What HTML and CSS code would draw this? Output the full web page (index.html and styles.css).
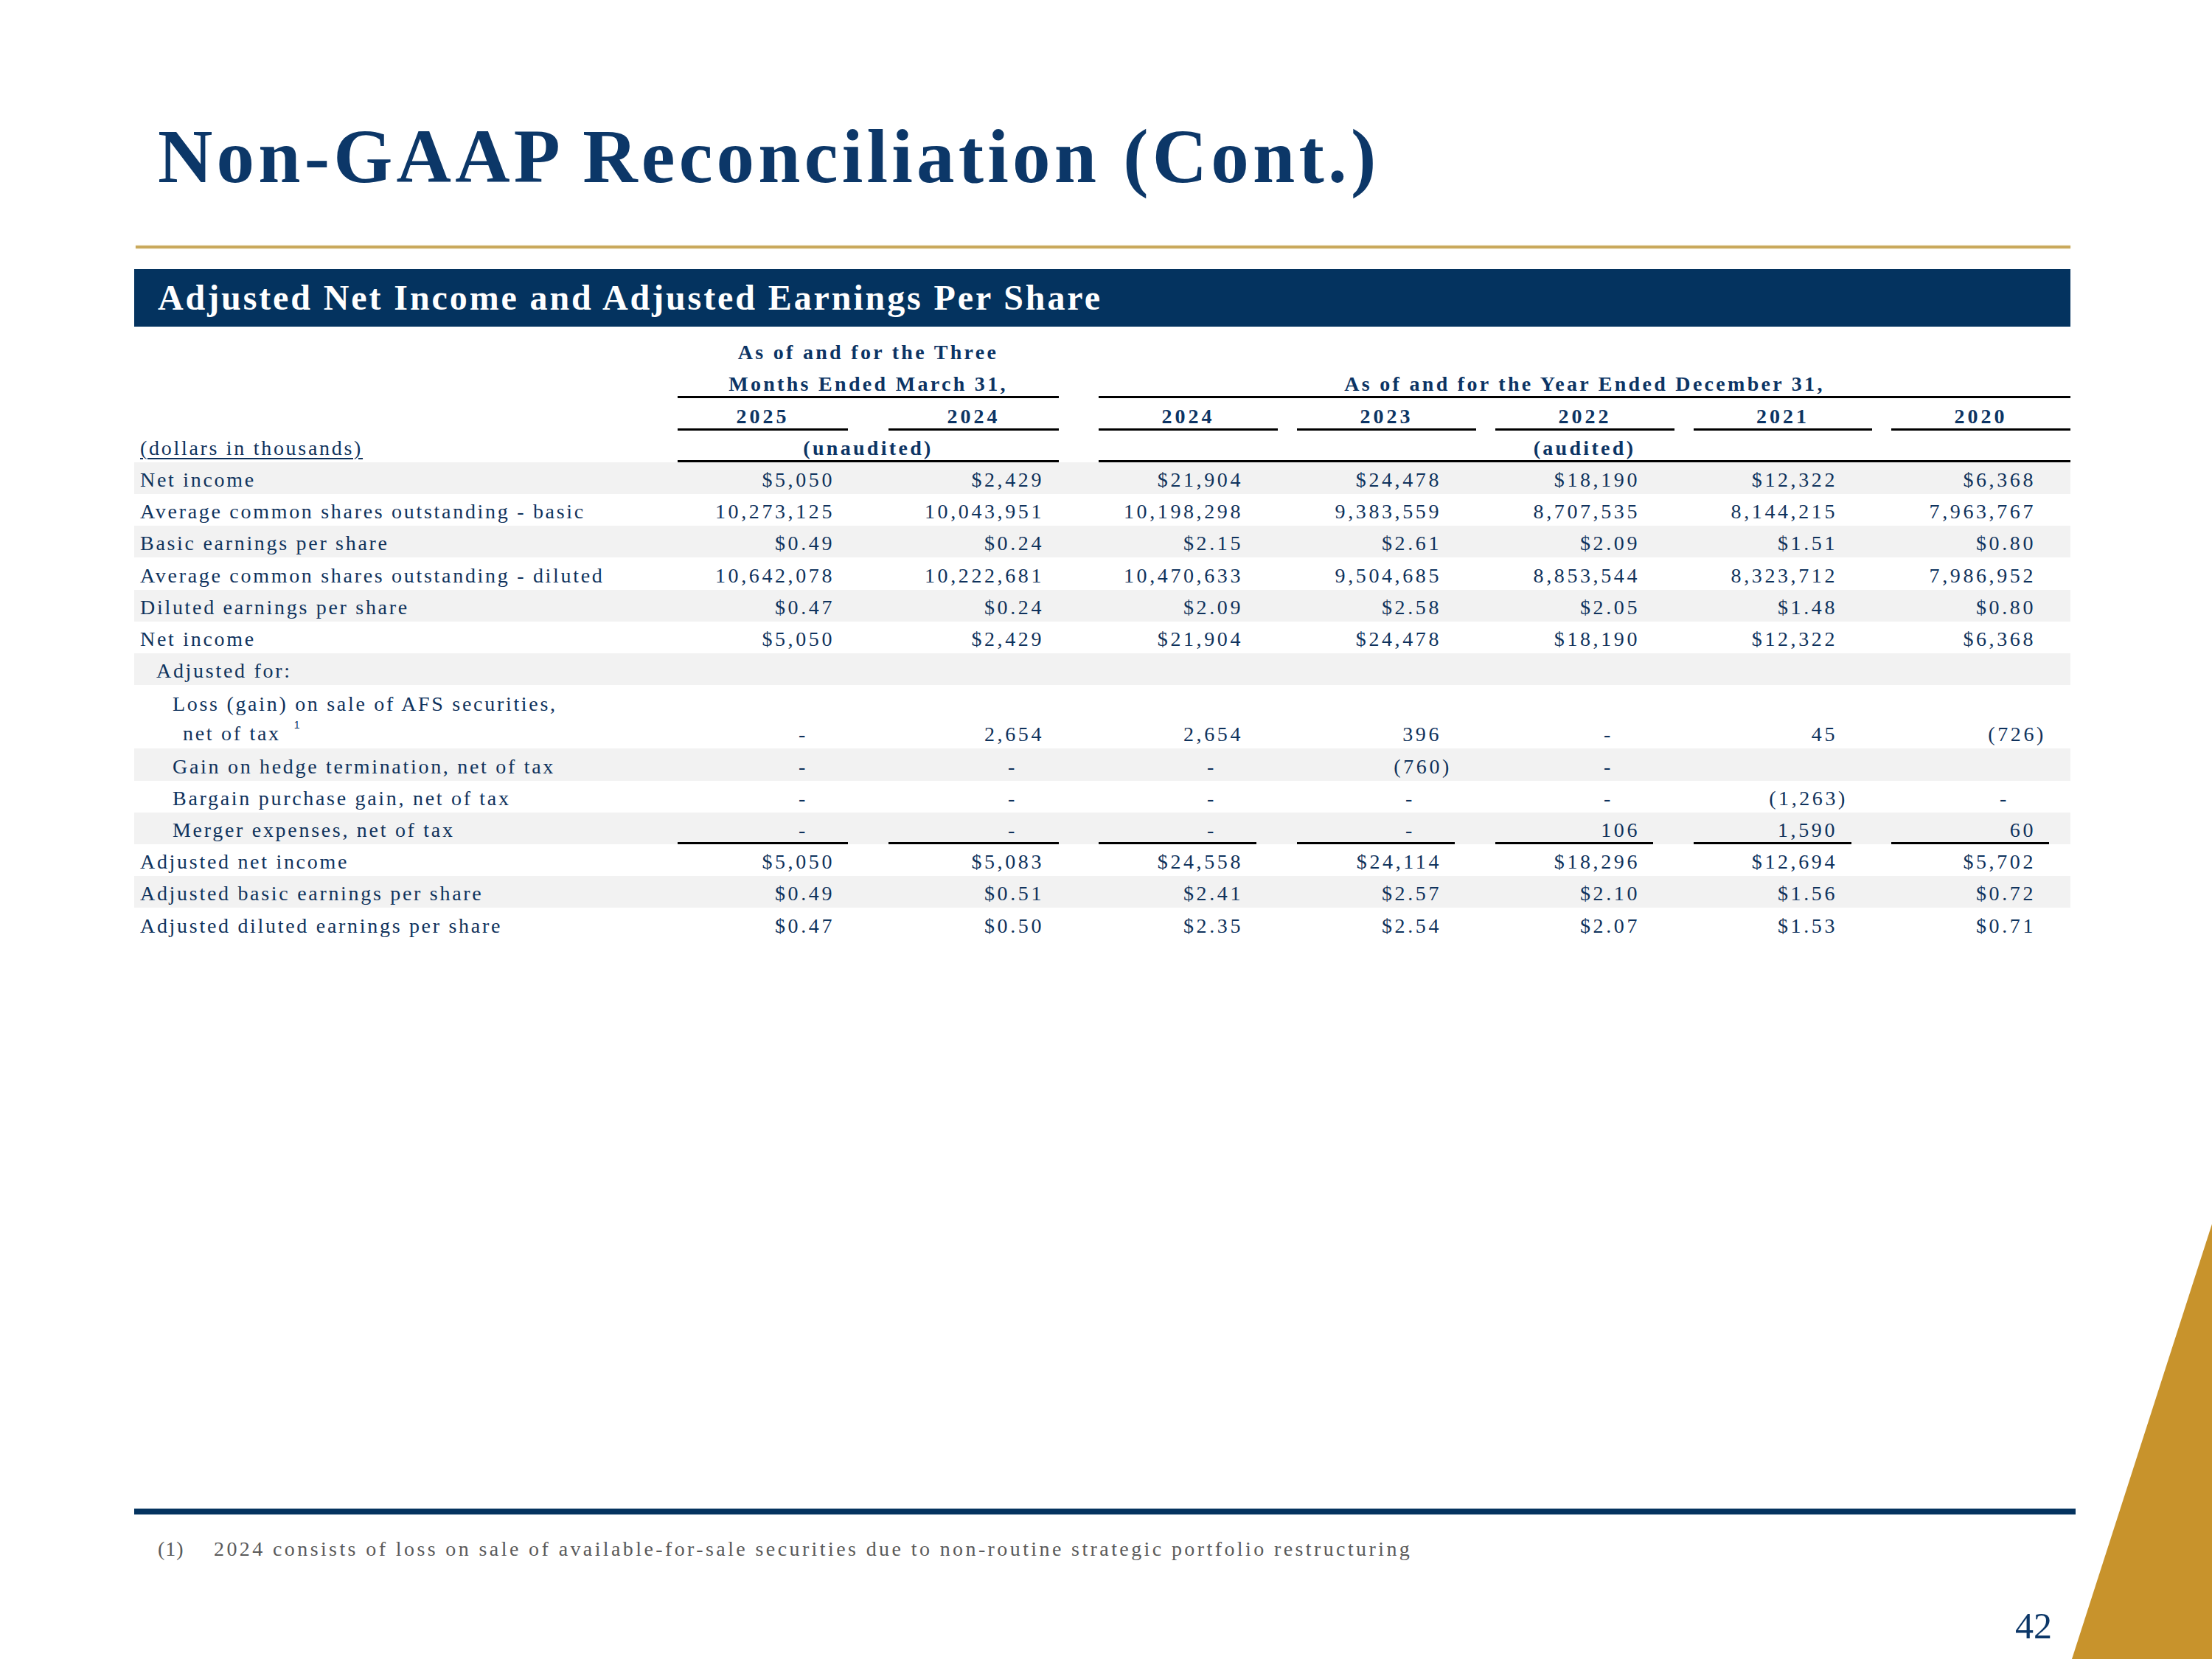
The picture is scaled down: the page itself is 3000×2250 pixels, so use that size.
FILE: index.html
```html
<!DOCTYPE html>
<html>
<head>
<meta charset="utf-8">
<title>Non-GAAP Reconciliation (Cont.)</title>
<link rel="stylesheet" href="styles.css">
</head>
<body>
<div class="page">
  <h1 class="title">Non-GAAP Reconciliation (Cont.)</h1>
  <div class="rule-gold"></div>
  <div class="bar">Adjusted Net Income and Adjusted Earnings Per Share</div>

  <table class="recon">
    <colgroup>
      <col class="w-label">
      <col class="w-q"><col class="w-gq"><col class="w-q"><col class="w-gm">
      <col class="w-y"><col class="w-gy"><col class="w-y"><col class="w-gy"><col class="w-y"><col class="w-gy"><col class="w-y6"><col class="w-gy"><col class="w-y">
    </colgroup>
    <tr class="hd">
      <td></td>
      <td colspan="3" class="hc">As of and for the Three</td>
      <td colspan="10"></td>
    </tr>
    <tr class="hd">
      <td></td>
      <td colspan="3" class="hc ln">Months Ended March 31,</td>
      <td></td>
      <td colspan="9" class="hc ln">As of and for the Year Ended December 31,</td>
    </tr>
    <tr class="hd">
      <td></td>
      <td class="hy ln">2025</td><td></td>
      <td class="hy ln">2024</td><td></td>
      <td class="hy ln">2024</td><td></td>
      <td class="hy ln">2023</td><td></td>
      <td class="hy ln">2022</td><td></td>
      <td class="hy ln">2021</td><td></td>
      <td class="hy ln">2020</td>
    </tr>
    <tr class="hd">
      <td class="lbl"><span class="units">(dollars in thousands)</span></td>
      <td colspan="3" class="hc ln">(unaudited)</td>
      <td></td>
      <td colspan="9" class="hc ln">(audited)</td>
    </tr>

    <tr class="shade">
      <td class="lbl">Net income</td>
      <td class="n q1">$5,050</td><td></td><td class="n q2">$2,429</td><td></td>
      <td class="n">$21,904</td><td></td><td class="n">$24,478</td><td></td><td class="n">$18,190</td><td></td><td class="n">$12,322</td><td></td><td class="n">$6,368</td>
    </tr>
    <tr>
      <td class="lbl">Average common shares outstanding - basic</td>
      <td class="n q1">10,273,125</td><td></td><td class="n q2">10,043,951</td><td></td>
      <td class="n">10,198,298</td><td></td><td class="n">9,383,559</td><td></td><td class="n">8,707,535</td><td></td><td class="n">8,144,215</td><td></td><td class="n">7,963,767</td>
    </tr>
    <tr class="shade">
      <td class="lbl">Basic earnings per share</td>
      <td class="n q1">$0.49</td><td></td><td class="n q2">$0.24</td><td></td>
      <td class="n">$2.15</td><td></td><td class="n">$2.61</td><td></td><td class="n">$2.09</td><td></td><td class="n">$1.51</td><td></td><td class="n">$0.80</td>
    </tr>
    <tr>
      <td class="lbl">Average common shares outstanding - diluted</td>
      <td class="n q1">10,642,078</td><td></td><td class="n q2">10,222,681</td><td></td>
      <td class="n">10,470,633</td><td></td><td class="n">9,504,685</td><td></td><td class="n">8,853,544</td><td></td><td class="n">8,323,712</td><td></td><td class="n">7,986,952</td>
    </tr>
    <tr class="shade">
      <td class="lbl">Diluted earnings per share</td>
      <td class="n q1">$0.47</td><td></td><td class="n q2">$0.24</td><td></td>
      <td class="n">$2.09</td><td></td><td class="n">$2.58</td><td></td><td class="n">$2.05</td><td></td><td class="n">$1.48</td><td></td><td class="n">$0.80</td>
    </tr>
    <tr>
      <td class="lbl">Net income</td>
      <td class="n q1">$5,050</td><td></td><td class="n q2">$2,429</td><td></td>
      <td class="n">$21,904</td><td></td><td class="n">$24,478</td><td></td><td class="n">$18,190</td><td></td><td class="n">$12,322</td><td></td><td class="n">$6,368</td>
    </tr>
    <tr class="shade">
      <td class="lbl ind1">Adjusted for:</td>
      <td></td><td></td><td></td><td></td>
      <td></td><td></td><td></td><td></td><td></td><td></td><td></td><td></td><td></td>
    </tr>
    <tr class="tall">
      <td class="lbl ind2 two"><span class="l1">Loss (gain) on sale of AFS securities,</span><span class="l2">net of tax<sup class="fn">1</sup></span></td>
      <td class="n q1 d">-</td><td></td><td class="n q2">2,654</td><td></td>
      <td class="n">2,654</td><td></td><td class="n">396</td><td></td><td class="n d">-</td><td></td><td class="n">45</td><td></td><td class="n"><span class="neg">(726)</span></td>
    </tr>
    <tr class="shade">
      <td class="lbl ind2">Gain on hedge termination, net of tax</td>
      <td class="n q1 d">-</td><td></td><td class="n q2 d">-</td><td></td>
      <td class="n d">-</td><td></td><td class="n"><span class="neg">(760)</span></td><td></td><td class="n d">-</td><td></td><td class="n"></td><td></td><td class="n"></td>
    </tr>
    <tr>
      <td class="lbl ind2">Bargain purchase gain, net of tax</td>
      <td class="n q1 d">-</td><td></td><td class="n q2 d">-</td><td></td>
      <td class="n d">-</td><td></td><td class="n d">-</td><td></td><td class="n d">-</td><td></td><td class="n"><span class="neg">(1,263)</span></td><td></td><td class="n d">-</td>
    </tr>
    <tr class="shade">
      <td class="lbl ind2">Merger expenses, net of tax</td>
      <td class="n q1 d ln">-</td><td></td><td class="n q2 d ln">-</td><td></td>
      <td class="n d ln short">-</td><td></td><td class="n d ln short">-</td><td></td><td class="n ln short">106</td><td></td><td class="n ln short">1,590</td><td></td><td class="n ln short">60</td>
    </tr>
    <tr>
      <td class="lbl">Adjusted net income</td>
      <td class="n q1">$5,050</td><td></td><td class="n q2">$5,083</td><td></td>
      <td class="n">$24,558</td><td></td><td class="n">$24,114</td><td></td><td class="n">$18,296</td><td></td><td class="n">$12,694</td><td></td><td class="n">$5,702</td>
    </tr>
    <tr class="shade">
      <td class="lbl">Adjusted basic earnings per share</td>
      <td class="n q1">$0.49</td><td></td><td class="n q2">$0.51</td><td></td>
      <td class="n">$2.41</td><td></td><td class="n">$2.57</td><td></td><td class="n">$2.10</td><td></td><td class="n">$1.56</td><td></td><td class="n">$0.72</td>
    </tr>
    <tr>
      <td class="lbl">Adjusted diluted earnings per share</td>
      <td class="n q1">$0.47</td><td></td><td class="n q2">$0.50</td><td></td>
      <td class="n">$2.35</td><td></td><td class="n">$2.54</td><td></td><td class="n">$2.07</td><td></td><td class="n">$1.53</td><td></td><td class="n">$0.71</td>
    </tr>
  </table>

  <div class="footer">
    <div class="rule-navy"></div>
    <div class="footnote"><span class="fn-mark">(1)</span><span class="fn-text">2024 consists of loss on sale of available-for-sale securities due to non-routine strategic portfolio restructuring</span></div>
    <div class="pageno">42</div>
  </div>
</div>

<svg class="corner" width="190" height="590" viewBox="0 0 190 590" aria-hidden="true">
  <polygon points="190,0 190,590 0,590" fill="#c8932c"/>
</svg>
</body>
</html>
```

FILE: styles.css
```css
* { box-sizing: border-box; }

html, body {
  margin: 0;
  padding: 0;
  background: #ffffff;
}

body {
  width: 3000px;
  height: 2250px;
  position: relative;
  overflow: hidden;
  font-family: "Liberation Serif", "Times New Roman", serif;
  color: #0f325c;
}

.page {
  width: 2808px;
  height: 2250px;
  padding-left: 182px;
  display: flex;
  flex-direction: column;
}

.title {
  margin: 162px 0 0 32px;
  height: 100px;
  font-size: 103px;
  line-height: 100px;
  font-weight: bold;
  letter-spacing: 5.2px;
  color: #0c3768;
  white-space: nowrap;
}

.rule-gold {
  margin-top: 71px;
  margin-left: 2px;
  height: 4px;
  background: #c9a95c;
  box-shadow: 0 0 2px #eadcb4;
}

.bar {
  margin-top: 28px;
  height: 78px;
  background: #04335f;
  color: #ffffff;
  font-size: 48px;
  line-height: 78px;
  font-weight: bold;
  letter-spacing: 2.9px;
  padding-left: 32px;
  white-space: nowrap;
}

/* table */
.recon {
  margin-top: 11px;
  width: 2626px;
  table-layout: fixed;
  border-collapse: separate;
  border-spacing: 0;
}

.w-label { width: 737px; }
.w-q { width: 231px; }
.w-gq { width: 55px; }
.w-gm { width: 54px; }
.w-y { width: 243px; }
.w-y6 { width: 242px; }
.w-gy { width: 26px; }

.recon tr { height: 43.2px; }
.recon tr.tall { height: 86.4px; }
.recon tr.shade { background: #f2f2f2; }

.recon td {
  padding: 0 0 4px 0;
  vertical-align: bottom;
  font-size: 28px;
  line-height: 30px;
  white-space: nowrap;
  color: #0f325c;
}

.lbl {
  padding-left: 8px !important;
  letter-spacing: 2.7px;
  text-align: left;
}

.ind1 { padding-left: 30px !important; }
.ind2 { padding-left: 52px !important; }

.two { padding-bottom: 0 !important; line-height: 40px !important; }
.two .l1, .two .l2 { display: block; }
.two .l2 { padding-left: 14px; }

.fn {
  font-family: "Liberation Sans", Arial, sans-serif;
  font-size: 14px;
  line-height: 0;
  vertical-align: 16px;
  margin-left: 18px;
  letter-spacing: 0;
}

.units {
  text-decoration: underline;
  text-decoration-thickness: 2px;
  text-underline-offset: 4px;
}

.hc, .hy {
  font-weight: bold;
  text-align: center;
  color: #0c3464 !important;
}
.hc { letter-spacing: 3.3px; }
.hy { letter-spacing: 4px; }

.ln {
  background-image: linear-gradient(#000000, #000000);
  background-repeat: no-repeat;
  background-position: left bottom;
  background-size: 100% 3px;
}
.ln.short { background-size: 214px 3px; }

.n {
  text-align: right;
  letter-spacing: 3.6px;
  padding-right: 47px !important;
}
.n.q1 { padding-right: 18px !important; }
.n.q2 { padding-right: 20px !important; }
.n.d { padding-right: 83px !important; }
.n.q1.d { padding-right: 54px !important; }
.n.q2.d { padding-right: 56px !important; }

.neg { margin-right: -14px; }

/* footer */
.footer {
  margin-top: auto;
  display: flex;
  flex-direction: column;
}

.rule-navy {
  width: 2633px;
  height: 8px;
  background: #04335f;
}

.footnote {
  margin-top: 27px;
  height: 40px;
  line-height: 40px;
  font-size: 28px;
  color: #5a5a5a;
  padding-left: 32px;
  display: flex;
  white-space: nowrap;
}
.fn-mark { width: 76px; letter-spacing: 1px; }
.fn-text { letter-spacing: 3.4px; }

.pageno {
  margin-top: 59px;
  margin-bottom: 20px;
  height: 50px;
  line-height: 50px;
  font-size: 50px;
  text-align: right;
  padding-right: 25px;
  color: #0c3768;
}

.corner {
  position: absolute;
  right: 0;
  bottom: 0;
  display: block;
}
```
